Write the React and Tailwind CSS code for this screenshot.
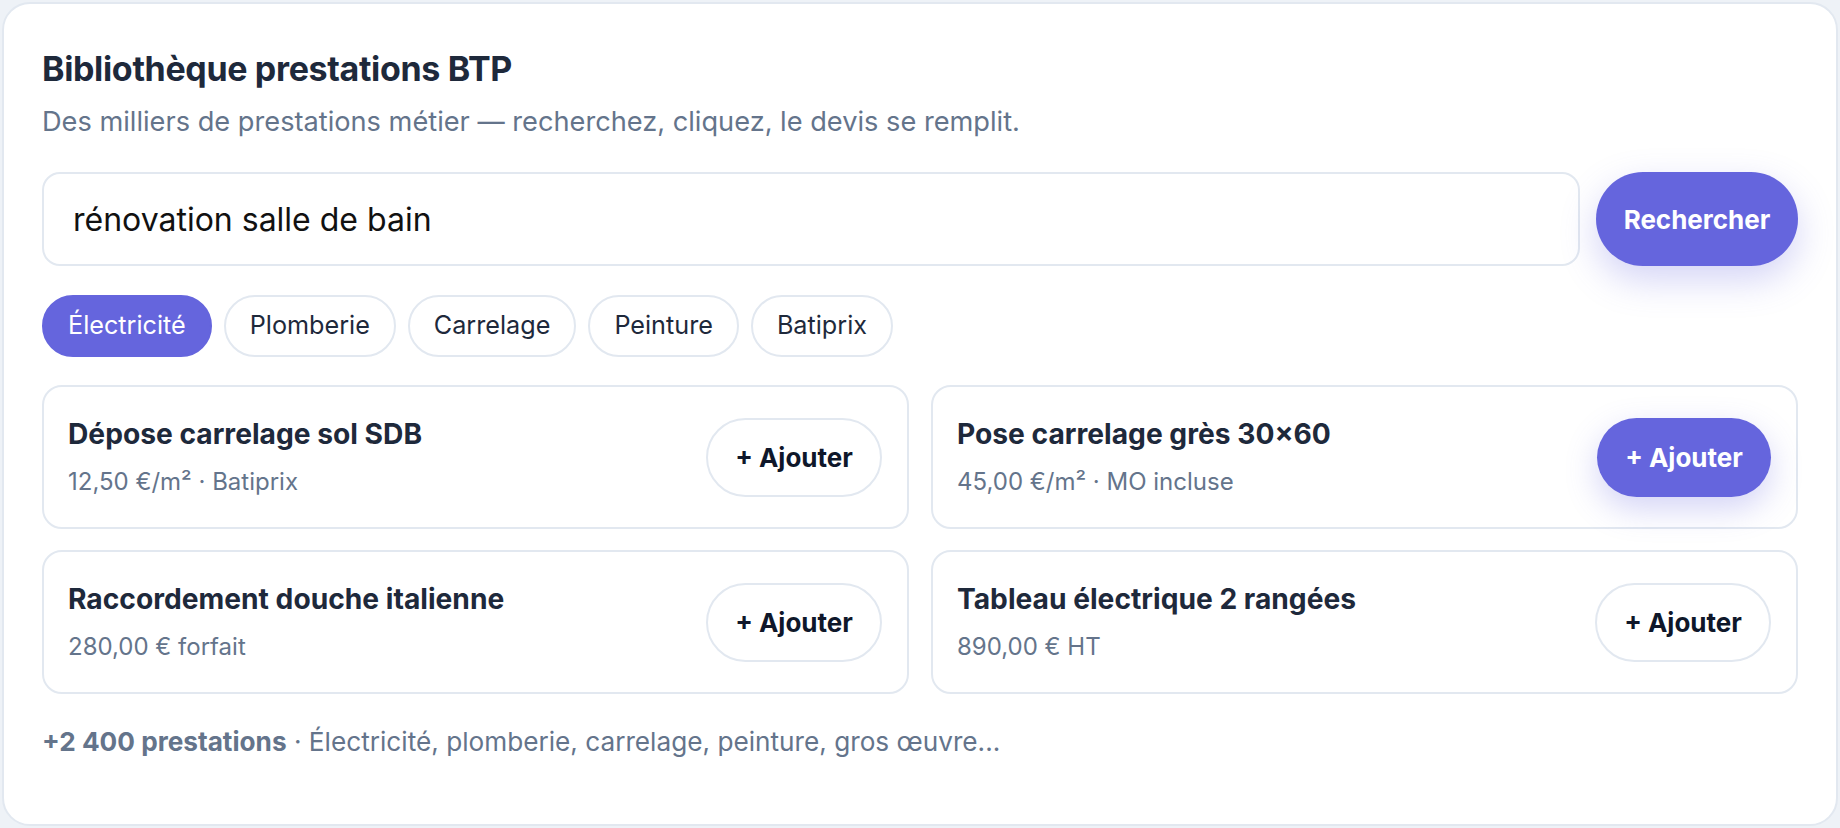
import { useState } from 'react';

const chips = ['Électricité', 'Plomberie', 'Carrelage', 'Peinture', 'Batiprix'];

const items = [
  { title: 'Dépose carrelage sol SDB', meta: '12,50 €/m² · Batiprix', active: false },
  { title: 'Pose carrelage grès 30×60', meta: '45,00 €/m² · MO incluse', active: true },
  { title: 'Raccordement douche italienne', meta: '280,00 € forfait', active: false },
  { title: 'Tableau électrique 2 rangées', meta: '890,00 € HT', active: false },
];

function ItemCard({ title, meta, active }) {
  return (
    <div className="flex h-[144px] items-center justify-between rounded-[20px] border-2 border-[#e2e8f0] bg-white pl-[24px] pr-[25px]">
      <div>
        <div className="text-[28.2px] font-bold leading-[36px] text-[#1e293b]">{title}</div>
        <div className="mt-[14px] text-[24px] leading-[32px] text-[#64748b]">{meta}</div>
      </div>
      {active ? (
        <button
          type="button"
          className="h-[79px] w-[174px] rounded-full bg-[#6565dd] text-[26px] font-bold text-white shadow-[0_12px_32px_rgba(101,101,221,0.28)]"
        >
          + Ajouter
        </button>
      ) : (
        <button
          type="button"
          className="h-[79px] w-[176px] rounded-full border-2 border-[#e2e8f0] bg-white text-[26px] font-bold text-[#0f172a]"
        >
          + Ajouter
        </button>
      )}
    </div>
  );
}

export default function App() {
  const [query, setQuery] = useState('rénovation salle de bain');
  const [selected, setSelected] = useState('Électricité');

  return (
    <div className="min-h-screen bg-[#eef2f7] p-[2px] font-['Inter',sans-serif]">
      <div className="h-[824px] rounded-[28px] border-2 border-[#e2e8f0] bg-white px-[38px] pt-[44px]">
        <h2 className="text-[34px] font-bold leading-[41px] tracking-[-0.01em] text-[#1e293b]">
          Bibliothèque prestations BTP
        </h2>
        <p className="mt-[16px] text-[27.2px] leading-[34px] text-[#64748b]">
          Des milliers de prestations métier — recherchez, cliquez, le devis se remplit.
        </p>

        <div className="mt-[33px] flex gap-4">
          <input
            type="text"
            value={query}
            onChange={(e) => setQuery(e.target.value)}
            className="h-[94px] flex-1 rounded-[18px] border-2 border-[#e2e8f0] bg-white px-[29px] text-[32px] text-[#111] focus:outline-none"
          />
          <button
            type="button"
            className="h-[94px] w-[202px] rounded-full bg-[#6565dd] text-[26px] font-bold text-white shadow-[0_14px_36px_rgba(101,101,221,0.28)]"
          >
            Rechercher
          </button>
        </div>

        <div className="mt-[29px] flex gap-[12px]">
          {chips.map((chip) =>
            chip === selected ? (
              <button
                key={chip}
                type="button"
                onClick={() => setSelected(chip)}
                className="h-[62px] rounded-full border-2 border-[#6565dd] bg-[#6565dd] px-[24px] text-[25.2px] text-white"
              >
                {chip}
              </button>
            ) : (
              <button
                key={chip}
                type="button"
                onClick={() => setSelected(chip)}
                className="h-[62px] rounded-full border-2 border-[#e2e8f0] bg-white px-[24px] text-[25.2px] text-[#1e293b]"
              >
                {chip}
              </button>
            )
          )}
        </div>

        <div className="mt-[28px] grid grid-cols-2 gap-x-[22px] gap-y-[21px]">
          {items.map((item) => (
            <ItemCard key={item.title} {...item} />
          ))}
        </div>

        <p className="mt-[32px] text-[26.2px] leading-[32px] text-[#64748b]">
          <span className="font-bold">+2 400 prestations</span> · Électricité, plomberie, carrelage, peinture, gros œuvre...
        </p>
      </div>
    </div>
  );
}
